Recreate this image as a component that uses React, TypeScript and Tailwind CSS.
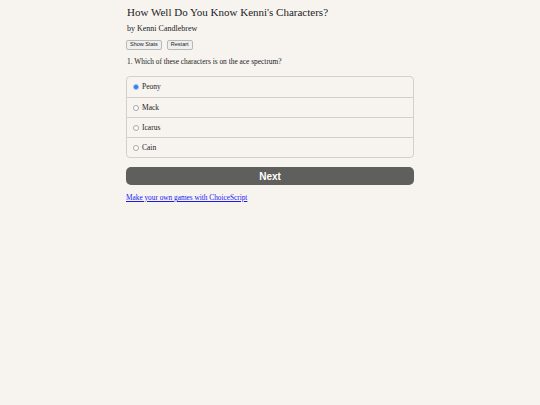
import React, { useState } from 'react';

const OPTIONS = ['Peony', 'Mack', 'Icarus', 'Cain'];

export default function App() {
    const [choice, setChoice] = useState(0);

    return (
        <div className="min-h-[405px] w-full bg-[#f7f4f0] text-[#222] font-['Liberation_Serif',serif]">
            <div className="mx-auto w-[288px] pt-[5px]">
                <h1 className="text-[11px] leading-[14px] pl-px">How Well Do You Know Kenni's Characters?</h1>
                <div className="mt-[5px] text-[8px] leading-[10px] pl-px">by Kenni Candlebrew</div>
                <div className="mt-[6px] flex gap-[5px] font-['Liberation_Sans',sans-serif] text-[5.5px]">
                    <button className="h-[10px] px-[3px] rounded-[2px] border border-[#b8b8b8] bg-[#efefef] leading-none">Show Stats</button>
                    <button className="h-[10px] px-[3px] rounded-[2px] border border-[#b8b8b8] bg-[#efefef] leading-none">Restart</button>
                </div>
                <p className="mt-[6.5px] text-[7.4px] leading-[9px] pl-px">1. Which of these characters is on the ace spectrum?</p>
                <div className="mt-[10.5px] rounded-[4px] border border-[#d3d0cc]">
                    {OPTIONS.map((opt, i) => (
                        <label
                            key={opt}
                            className={`flex h-[20px] items-center gap-[3px] pl-[6px] text-[7.5px] ${i > 0 ? 'border-t border-[#d3d0cc]' : ''}`}
                        >
                            <input
                                type="radio"
                                name="choice"
                                checked={choice === i}
                                onChange={() => setChoice(i)}
                                className="m-0 h-[6px] w-[6px] appearance-none rounded-full border border-[#a8a8a8] bg-white checked:border-[#9cc2f2] checked:bg-[#2f7fe6]"
                            />
                            {opt}
                        </label>
                    ))}
                </div>
                <button className="mt-[9px] block h-[18px] w-full rounded-[5px] bg-[#5f5f5d] text-white font-['Liberation_Sans',sans-serif] font-bold text-[10px]">
                    Next
                </button>
                <a href="#" className="mt-[8px] block text-[7.3px] leading-[10px] text-[#1a1aee] underline">Make your own games with ChoiceScript</a>
            </div>
        </div>
    );
}
